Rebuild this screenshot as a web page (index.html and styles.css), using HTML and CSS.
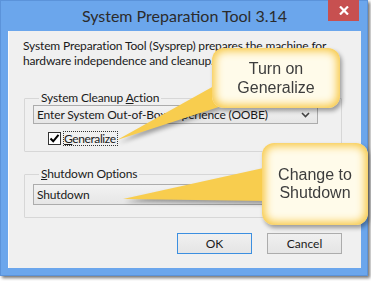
FILE: index.html
```html
<!DOCTYPE html>
<html lang="en">
<head>
<meta charset="UTF-8">
<title>System Preparation Tool 3.14</title>
<link rel="stylesheet" href="styles.css">
</head>
<body>
<div class="window">
    <div class="titlebar">
        <span></span>
        <div class="title">System Preparation Tool 3.14</div>
        <div class="close">
            <svg width="10" height="9" viewBox="0 0 10 9"><path d="M1 0.5 L9 8.5 M9 0.5 L1 8.5" stroke="#fff" stroke-width="2.2"/></svg>
        </div>
    </div>
    <div class="client">
        <p class="intro">System Preparation Tool (Sysprep) prepares the machine for<br>hardware independence and cleanup.</p>

        <fieldset class="group cleanup">
            <legend>System Cleanup <u>A</u>ction</legend>
            <div class="combo">
                <span>Enter System Out-of-Box Experience (OOBE)</span>
                <svg class="chev" width="9" height="6" viewBox="0 0 9 6"><path d="M1 1 L4.5 4.5 L8 1" fill="none" stroke="#444" stroke-width="1.6"/></svg>
            </div>
            <div class="check">
                <span class="box">
                    <svg width="11" height="11" viewBox="0 0 11 11"><path d="M1.5 5.5 L4.2 8.3 L9.5 1.8" fill="none" stroke="#000" stroke-width="2"/></svg>
                </span>
                <span class="focus"><u>G</u>eneralize</span>
            </div>
        </fieldset>

        <fieldset class="group shutdown">
            <legend><u>S</u>hutdown Options</legend>
            <div class="combo">
                <span>Shutdown</span>
            </div>
        </fieldset>

        <div class="buttons">
            <button class="btn default">OK</button>
            <button class="btn">Cancel</button>
        </div>
    </div>
</div>

<div class="callouts">
    <svg class="tails" width="371" height="281" viewBox="0 0 371 281">
        <polygon points="117,140 214,86 228,104" fill="#f8cd4e"/>
        <polygon points="123,199 268,167 268,201" fill="#f8cd4e"/>
    </svg>
    <div class="bubble one">Turn on<br>Generalize</div>
    <div class="bubble two">Change to<br>Shutdown</div>
</div>
</body>
</html>
```

FILE: styles.css
```css
body {
    margin: 0;
    background-color: #ffffff;
    font-family: Lato, "Noto Sans", sans-serif;
    font-size: 12px;
    letter-spacing: -0.15px;
    color: #1a1a1a;
    position: relative;
    width: 371px;
    height: 281px;
    overflow: hidden;
}

.window {
    width: 368px;
    height: 276px;
    box-sizing: border-box;
    background-color: #6ba6ec;
    border: 1px solid #5b93da;
    padding: 0 6px 7px 7px;
    box-shadow: 2px 2px 3px rgba(0, 0, 0, 0.55);
    display: flex;
    flex-direction: column;
}

.titlebar {
    height: 30px;
    display: grid;
    grid-template-columns: 40px 1fr 40px;
    align-items: start;
}
.title {
    text-align: center;
    font-size: 16px;
    letter-spacing: 0;
    line-height: 30px;
    color: #2b2b2b;
}
.close {
    justify-self: end;
    margin-top: -1px;
    margin-right: 2px;
    width: 31px;
    height: 21px;
    background-color: #c75050;
    display: flex;
    align-items: center;
    justify-content: center;
}

.client {
    flex: 1;
    background-color: #f0f0f0;
    padding: 0 19px 0 15px;
    box-shadow: inset 1px 0 0 #fbfbfb;
}

.intro {
    margin: 7px 0 0 0;
    line-height: 15px;
    white-space: nowrap;
}

.group {
    margin: 0 0 0 1px;
    padding: 0 8px;
    min-width: 0;
    border: 1px solid #d7d7d7;
    border-radius: 1px;
}
.group legend {
    padding: 0 2px;
    margin-left: 6px;
    line-height: 14px;
}
.cleanup {
    margin-top: 23px;
    padding-bottom: 5px;
}
.shutdown {
    margin-top: 15px;
    padding-bottom: 12px;
}
.shutdown .combo {
    margin-top: 3px;
    height: 21px;
}

.combo {
    height: 19px;
    width: 285px;
    box-sizing: border-box;
    border: 1px solid #acacac;
    background: linear-gradient(#f2f2f2, #e6e6e6);
    display: flex;
    align-items: center;
    justify-content: space-between;
    padding: 0 7px 0 3px;
}
.chev {
    display: block;
}

.check {
    margin: 7px 0 0 15px;
    height: 15px;
    display: flex;
    align-items: center;
}
.box {
    width: 13px;
    height: 13px;
    box-sizing: border-box;
    border: 1px solid #333333;
    background-color: #ffffff;
    display: flex;
    align-items: center;
    justify-content: center;
}
.focus {
    margin-left: 2px;
    padding: 0 1px 0 0;
    letter-spacing: -0.4px;
    line-height: 13px;
    border: 1px dotted #333333;
}

.buttons {
    margin-top: 15px;
    display: flex;
    justify-content: flex-end;
    gap: 15px;
}
.btn {
    width: 75px;
    height: 21px;
    font-family: inherit;
    font-size: 12px;
    color: #1a1a1a;
    border: 1px solid #acacac;
    background: linear-gradient(#f0f0f0, #e5e5e5);
    padding: 0;
}
.btn.default {
    border-color: #3c8fe0;
}

.callouts {
    position: absolute;
    left: 0;
    top: 0;
    width: 371px;
    height: 281px;
    filter: drop-shadow(2px 3px 2px rgba(0, 0, 0, 0.35));
    pointer-events: none;
}
.tails {
    position: absolute;
    left: 0;
    top: 0;
}
.bubble {
    position: absolute;
    box-sizing: border-box;
    display: flex;
    align-items: center;
    justify-content: center;
    text-align: center;
    font-family: "Liberation Sans", Arial, sans-serif;
    font-size: 16px;
    letter-spacing: 0;
    line-height: 19px;
    color: #3d3d3d;
    border-radius: 12px;
    background-color: #fffbea;
    box-shadow: inset 0 0 9px 3px #f7c743;
}
.bubble.one {
    left: 212px;
    top: 48px;
    width: 128px;
    height: 60px;
}
.bubble.two {
    left: 262px;
    top: 143px;
    width: 106px;
    height: 82px;
    line-height: 18px;
}
```
